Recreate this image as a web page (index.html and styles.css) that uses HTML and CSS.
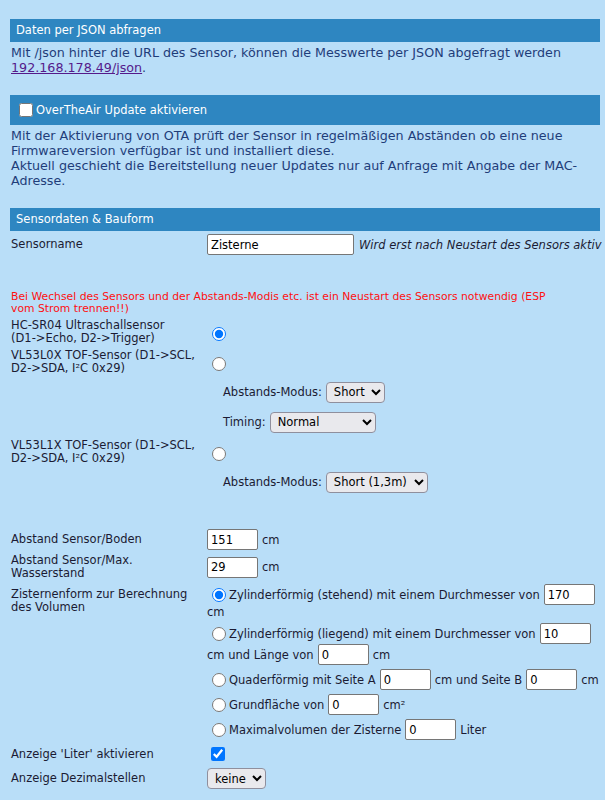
FILE: index.html
```html
<!DOCTYPE html>
<html lang="de">
<head>
<meta charset="utf-8">
<title>Sensor Einstellungen</title>
<link rel="stylesheet" href="styles.css">
</head>
<body>
<div class="page">
  <div class="bar">Daten per JSON abfragen</div>
  <p class="info">Mit /json hinter die URL des Sensor, können die Messwerte per JSON abgefragt werden<br><a href="#" class="link">192.168.178.49/json</a>.</p>

  <div class="bar bar-check"><input type="checkbox" class="bar-box">OverTheAir Update aktivieren</div>
  <p class="info">Mit der Aktivierung von OTA prüft der Sensor in regelmäßigen Abständen ob eine neue<br>Firmwareversion verfügbar ist und installiert diese.<br>Aktuell geschieht die Bereitstellung neuer Updates nur auf Anfrage mit Angabe der MAC-<br>Adresse.</p>

  <div class="bar">Sensordaten &amp; Bauform</div>
  <div class="form">
    <div class="lbl">Sensorname</div>
    <div class="val"><input type="text" class="field field-name" value="Zisterne"><span class="hint">Wird erst nach Neustart des Sensors aktiv</span></div>

    <div class="spacer spacer-red"></div>
    <div class="warn">Bei Wechsel des Sensors und der Abstands-Modis etc. ist ein Neustart des Sensors notwendig (ESP<br>vom Strom trennen!!)</div>

    <div class="lbl">HC-SR04 Ultraschallsensor<br>(D1-&gt;Echo, D2-&gt;Trigger)</div>
    <div class="val"><input type="radio" name="sensor" class="rad" checked></div>

    <div class="lbl">VL53L0X TOF-Sensor (D1-&gt;SCL,<br>D2-&gt;SDA, I²C 0x29)</div>
    <div class="val"><input type="radio" name="sensor" class="rad"></div>

    <div class="lbl"></div>
    <div class="val sub">Abstands-Modus:<select class="sel sel-short"><option>Short</option></select></div>

    <div class="lbl"></div>
    <div class="val sub">Timing:<select class="sel sel-normal"><option>Normal</option></select></div>

    <div class="lbl">VL53L1X TOF-Sensor (D1-&gt;SCL,<br>D2-&gt;SDA, I²C 0x29)</div>
    <div class="val"><input type="radio" name="sensor" class="rad"></div>

    <div class="lbl"></div>
    <div class="val sub">Abstands-Modus:<select class="sel sel-long"><option>Short (1,3m)</option></select></div>

    <div class="spacer spacer-dist"></div>

    <div class="lbl">Abstand Sensor/Boden</div>
    <div class="val"><input type="text" class="field field-num" value="151">cm</div>

    <div class="lbl">Abstand Sensor/Max.<br>Wasserstand</div>
    <div class="val"><input type="text" class="field field-num" value="29">cm</div>

    <div class="lbl lbl-top">Zisternenform zur Berechnung<br>des Volumen</div>
    <div class="opts">
      <div class="pair">
        <div class="line"><input type="radio" name="form" class="rad-opt" checked>Zylinderförmig (stehend) mit einem Durchmesser von<input type="text" class="field field-num" value="170"></div>
        <div class="unit">cm</div>
      </div>
      <div class="pair">
        <div class="line"><input type="radio" name="form" class="rad-opt">Zylinderförmig (liegend) mit einem Durchmesser von<input type="text" class="field field-num" value="10"></div>
        <div class="line">cm und Länge von<input type="text" class="field field-num" value="0">cm</div>
      </div>
      <div class="line"><input type="radio" name="form" class="rad-opt">Quaderförmig mit Seite A<input type="text" class="field field-num" value="0">cm und Seite B<input type="text" class="field field-num" value="0">cm</div>
      <div class="line"><input type="radio" name="form" class="rad-opt">Grundfläche von<input type="text" class="field field-num" value="0">cm²</div>
      <div class="line"><input type="radio" name="form" class="rad-opt">Maximalvolumen der Zisterne<input type="text" class="field field-num" value="0">Liter</div>
    </div>

    <div class="lbl">Anzeige 'Liter' aktivieren</div>
    <div class="val val-check"><input type="checkbox" class="chk" checked></div>

    <div class="lbl">Anzeige Dezimalstellen</div>
    <div class="val"><select class="sel sel-short"><option>keine</option></select></div>
  </div>
</div>
</body>
</html>
```
FILE: styles.css
```css
html, body {
  margin: 0;
  padding: 0;
  background: #b9def8;
}

body {
  font-family: "DejaVu Sans", Verdana, sans-serif;
  font-size: 11.5px;
  color: #1b1b33;
}

.page {
  margin: 19px 5px 0 10px;
  padding-bottom: 12px;
}

.bar {
  background: #2e86c1;
  color: #ffffff;
  height: 23px;
  line-height: 23px;
  padding-left: 6px;
}

.bar-check {
  height: 30px;
  display: flex;
  align-items: center;
}

.bar-box {
  width: 14px;
  height: 14px;
  margin: 0 3px 0 3px;
}

.info {
  margin: 3px 0 20px 1px;
  font-size: 12.7px;
  line-height: 15px;
  color: #1f3d7a;
}

.link {
  color: #551a8b;
}

.form {
  display: grid;
  grid-template-columns: 196px 1fr;
  row-gap: 4px;
  padding: 3px 0 0 1px;
}

.lbl {
  align-self: center;
  line-height: 13px;
  white-space: nowrap;
}

.lbl-top {
  align-self: start;
  padding-top: 4px;
}

.val {
  display: flex;
  align-items: center;
  gap: 4px;
  white-space: nowrap;
}

.val.sub {
  min-height: 26px;
  padding-left: 16px;
}

.spacer {
  grid-column: 1 / -1;
}

.spacer-red {
  height: 28px;
}

.spacer-dist {
  height: 26px;
}

.warn {
  grid-column: 1 / -1;
  color: #ff1010;
  font-size: 10.8px;
  line-height: 12px;
}

.field {
  box-sizing: border-box;
  height: 21px;
  margin: 0;
  padding: 1px 3px;
  border: 1px solid #767676;
  border-radius: 2px;
  background: #ffffff;
  color: #000000;
  font-family: "DejaVu Sans", Verdana, sans-serif;
  font-size: 11.5px;
}

.field-name {
  width: 147px;
}

.field-num {
  width: 51px;
}

.hint {
  font-style: italic;
  margin-left: 1px;
}

.rad {
  width: 14px;
  height: 14px;
  margin: 3px 3px 0 5px;
}

.sel {
  box-sizing: border-box;
  height: 21px;
  margin: 0;
  padding: 0 2px 0 3px;
  border: 1px solid #8f8f9d;
  border-radius: 4px;
  background-color: #e9e9ed;
  color: #000000;
  font-family: "DejaVu Sans", Verdana, sans-serif;
  font-size: 11.5px;
}

.sel-short {
  width: 59px;
}

.sel-normal {
  width: 106px;
}

.sel-long {
  width: 102px;
}

.opts {
  display: flex;
  flex-direction: column;
  gap: 4px;
}

.pair {
  display: flex;
  flex-direction: column;
}

.line {
  display: flex;
  align-items: center;
  gap: 4px;
  height: 21px;
  white-space: nowrap;
}

.rad-opt {
  width: 14px;
  height: 14px;
  margin: 0 -1px 0 5px;
}

.unit {
  height: 14px;
  line-height: 14px;
}

.val-check {
  min-height: 20px;
}

.chk {
  width: 14px;
  height: 14px;
  margin: 3px 3px 3px 4px;
}
```
